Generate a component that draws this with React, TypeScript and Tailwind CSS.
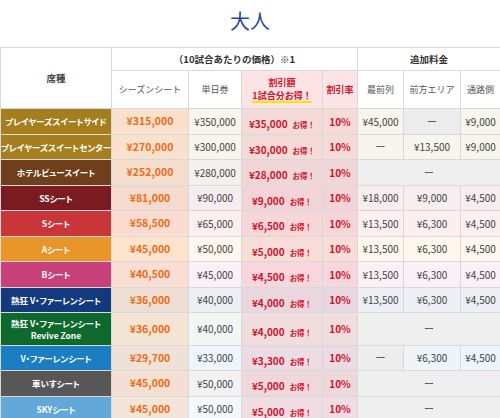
type Extra = { v: string; gray?: boolean };

type Row = {
  name: string;
  sub?: string;
  seat: string;
  tint: string;
  season: string;
  single: string;
  off: string;
  extra: Extra[] | null;
  tall?: boolean;
};

const rows: Row[] = [
  {
    name: "プレイヤーズスイートサイド",
    seat: "bg-[#a57f1d]",
    tint: "bg-[#a57f1d]/8",
    season: "¥315,000",
    single: "¥350,000",
    off: "¥35,000",
    extra: [{ v: "¥45,000" }, { v: "ー", gray: true }, { v: "¥9,000" }],
  },
  {
    name: "プレイヤーズスイートセンター",
    seat: "bg-[#a57f1d]",
    tint: "bg-[#a57f1d]/8",
    season: "¥270,000",
    single: "¥300,000",
    off: "¥30,000",
    extra: [{ v: "ー" }, { v: "¥13,500" }, { v: "¥9,000" }],
  },
  {
    name: "ホテルビュースイート",
    seat: "bg-[#6f3e1a]",
    tint: "bg-[#6f3e1a]/8",
    season: "¥252,000",
    single: "¥280,000",
    off: "¥28,000",
    extra: null,
  },
  {
    name: "SSシート",
    seat: "bg-[#7b1a20]",
    tint: "bg-[#7b1a20]/8",
    season: "¥81,000",
    single: "¥90,000",
    off: "¥9,000",
    extra: [{ v: "¥18,000" }, { v: "¥9,000" }, { v: "¥4,500" }],
  },
  {
    name: "Sシート",
    seat: "bg-[#c8363a]",
    tint: "bg-[#c8363a]/8",
    season: "¥58,500",
    single: "¥65,000",
    off: "¥6,500",
    extra: [{ v: "¥13,500" }, { v: "¥6,300" }, { v: "¥4,500" }],
  },
  {
    name: "Aシート",
    seat: "bg-[#e8962a]",
    tint: "bg-[#e8962a]/8",
    season: "¥45,000",
    single: "¥50,000",
    off: "¥5,000",
    extra: [{ v: "¥13,500" }, { v: "¥6,300" }, { v: "¥4,500" }],
  },
  {
    name: "Bシート",
    seat: "bg-[#c8417a]",
    tint: "bg-[#c8417a]/8",
    season: "¥40,500",
    single: "¥45,000",
    off: "¥4,500",
    extra: [{ v: "¥13,500" }, { v: "¥6,300" }, { v: "¥4,500" }],
  },
  {
    name: "熱狂 V・ファーレンシート",
    seat: "bg-[#123a7c]",
    tint: "bg-[#123a7c]/8",
    season: "¥36,000",
    single: "¥40,000",
    off: "¥4,000",
    extra: [{ v: "¥13,500" }, { v: "¥6,300" }, { v: "¥4,500" }],
  },
  {
    name: "熱狂 V・ファーレンシート",
    sub: "Revive Zone",
    seat: "bg-[#0e6a2c]",
    tint: "bg-[#0e6a2c]/5",
    season: "¥36,000",
    single: "¥40,000",
    off: "¥4,000",
    extra: null,
    tall: true,
  },
  {
    name: "V・ファーレンシート",
    seat: "bg-[#1b7dc2]",
    tint: "bg-[#1b7dc2]/8",
    season: "¥29,700",
    single: "¥33,000",
    off: "¥3,300",
    extra: [{ v: "ー", gray: true }, { v: "¥6,300" }, { v: "¥4,500" }],
  },
  {
    name: "車いすシート",
    seat: "bg-[#575757]",
    tint: "bg-[#575757]/8",
    season: "¥45,000",
    single: "¥50,000",
    off: "¥5,000",
    extra: null,
  },
  {
    name: "SKYシート",
    seat: "bg-[#62a8d9]",
    tint: "bg-[#62a8d9]/8",
    season: "¥45,000",
    single: "¥50,000",
    off: "¥5,000",
    extra: null,
  },
];

const cell = "border border-[#d9d9d9] p-0 text-center align-middle whitespace-nowrap";

const App = () => {
  return (
    <div className="w-[500px] bg-white font-['Noto_Sans_CJK_JP',sans-serif] text-[#444]">
      {/* Title */}
      <div className="flex h-[41px] items-center justify-center text-[20px] leading-none text-[#1c4b9c]">
        大人
      </div>

      <table className="mt-[6px] w-[500px] table-fixed border-collapse">
        <colgroup>
          <col className="w-[111px]" />
          <col className="w-[77px]" />
          <col className="w-[53px]" />
          <col className="w-[81px]" />
          <col className="w-[35px]" />
          <col className="w-[46px]" />
          <col className="w-[57px]" />
          <col className="w-[40px]" />
        </colgroup>
        <thead>
          <tr className="h-[23px]">
            <th rowSpan={2} className={`${cell} text-[9.5px] font-bold text-[#444]`}>
              席種
            </th>
            <th colSpan={4} className={`${cell} text-[9.5px] font-bold text-[#333]`}>
              （10試合あたりの価格）※1
            </th>
            <th colSpan={3} className={`${cell} text-[9.5px] font-bold text-[#333]`}>
              追加料金
            </th>
          </tr>
          <tr className="h-[38px] text-[9px] font-normal text-[#555]">
            <th className={`${cell} font-normal`}>シーズンシート</th>
            <th className={`${cell} font-normal`}>単日券</th>
            <th className={`${cell} bg-[#fbe3e6] font-bold text-[#d0122c]`}>
              <div className="leading-[13px]">割引額</div>
              <div className="mt-[1px] inline-block border-b-2 border-[#f7e600] leading-[11px]">
                1試合分お得！
              </div>
            </th>
            <th className={`${cell} bg-[#fbe3e6] font-bold text-[#d0122c]`}>割引率</th>
            <th className={`${cell} font-normal`}>最前列</th>
            <th className={`${cell} font-normal`}>前方エリア</th>
            <th className={`${cell} font-normal`}>通路側</th>
          </tr>
        </thead>
        <tbody>
          {rows.map((r, i) => (
            <tr key={i} className={`${r.tint} ${r.tall ? "h-[32.5px]" : "h-[25.5px]"}`}>
              <td
                className={`${cell} ${r.seat} text-[8.5px] font-bold leading-[12px] text-white [font-feature-settings:'palt']`}
              >
                <div>{r.name}</div>
                {r.sub && <div>{r.sub}</div>}
              </td>
              <td className={`${cell} bg-[#f57a1e]/15 text-[10.5px] font-bold text-[#f26a14]`}>
                {r.season}
              </td>
              <td className={`${cell} text-[10px] text-[#444]`}>{r.single}</td>
              <td className={`${cell} bg-[#dc1e3c]/12 font-bold text-[#d0122c]`}>
                <span className="text-[10px]">{r.off}</span>
                <span className="ml-[5px] text-[7.5px]">お得！</span>
              </td>
              <td className={`${cell} bg-[#dc1e3c]/12 text-[10px] font-bold text-[#d0122c]`}>
                10%
              </td>
              {r.extra ? (
                r.extra.map((e, j) => (
                  <td
                    key={j}
                    className={`${cell} text-[10px] text-[#444] ${e.gray ? "bg-[#ededed]" : ""}`}
                  >
                    {e.v}
                  </td>
                ))
              ) : (
                <td colSpan={3} className={`${cell} bg-[#efefef] text-[10px] text-[#444]`}>
                  ー
                </td>
              )}
            </tr>
          ))}
        </tbody>
      </table>
    </div>
  );
};

export default App;
